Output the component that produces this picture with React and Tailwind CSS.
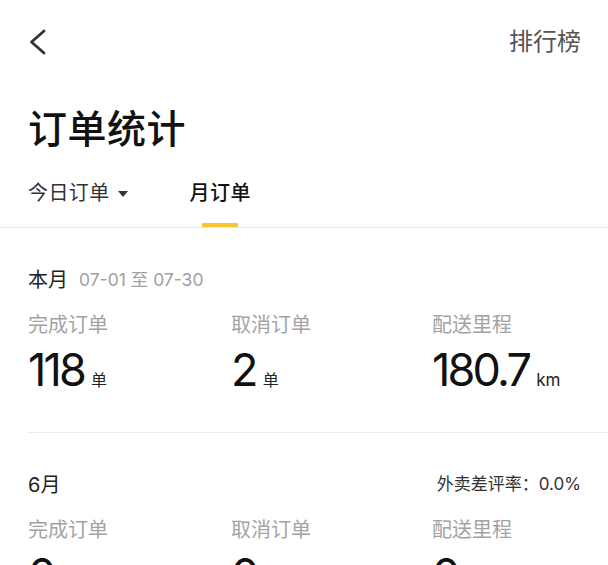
import React from 'react';

const font = "font-['Inter','Noto_Sans_CJK_SC',sans-serif]";

const Stat = ({ label, value, unit }) => (
    <div className="flex flex-col">
        <span className="text-[20px] leading-[28px] text-[#a3a3a3]">{label}</span>
        <div className="mt-[7px] flex items-baseline">
            <span className="text-[45px] leading-[48px] tracking-[-2.8px] text-[#111]">{value}</span>
            <span className={`ml-[7px] text-[#222] ${unit === 'km' ? 'text-[17px]' : 'text-[16px]'}`}>{unit}</span>
        </div>
    </div>
);

const Section = ({ title, extra, right, stats, divider }) => (
    <div className={`pt-[38px] pb-[38px] ml-7 ${divider ? 'border-b border-[#ececec]' : ''}`}>
        <div className="flex items-center justify-between pr-[27px] h-[28px]">
            <div className="flex items-center">
                <span className="text-[20px] text-[#222]">{title}</span>
                {extra && <span className="ml-[11px] text-[17.5px] text-[#a0a0a0]">{extra}</span>}
            </div>
            {right && <span className="text-[17px] text-[#333]">{right}</span>}
        </div>
        <div className="mt-[17px] grid grid-cols-[203px_201px_1fr]">
            {stats.map((s, i) => (
                <Stat key={i} {...s} />
            ))}
        </div>
    </div>
);

export default function App() {
    return (
        <div className={`w-[608px] h-[565px] overflow-hidden bg-white ${font}`}>
            {/* top bar */}
            <div className="h-[83px] px-7 flex items-center justify-between">
                <svg width="20" height="26" viewBox="0 0 20 26" fill="none" className="-ml-[1px]">
                    <path d="M17 2 L4.5 13 L17 24" stroke="#333" strokeWidth="2.8" strokeLinecap="round" strokeLinejoin="round" />
                </svg>
                <span className="text-[24px] text-[#555] -mr-[1px]">排行榜</span>
            </div>

            {/* title */}
            <div className="h-[92px] px-7 flex items-center">
                <h1 className="text-[39px] font-medium text-[#111] tracking-[0.5px]">订单统计</h1>
            </div>

            {/* tabs */}
            <div className="h-[53px] px-7 flex border-b border-[#e6e6e6]">
                <div className="flex items-start">
                    <span className="text-[20px] leading-[36px] text-[#333] tracking-[0.4px]">今日订单</span>
                    <svg width="10" height="6" viewBox="0 0 10 6" className="ml-[8px] mt-[16px]">
                        <path d="M0 0 H10 L5 6 Z" fill="#333" />
                    </svg>
                </div>
                <div className="ml-[62px] flex flex-col items-center">
                    <span className="text-[20px] leading-[36px] text-[#111] font-medium tracking-[0.4px]">月订单</span>
                    <div className="mt-[12px] h-1 w-9 bg-[#f5c72e]" />
                </div>
            </div>

            <Section
                title="本月"
                extra="07-01 至 07-30"
                divider
                stats={[
                    { label: '完成订单', value: '118', unit: '单' },
                    { label: '取消订单', value: '2', unit: '单' },
                    { label: '配送里程', value: '180.7', unit: 'km' },
                ]}
            />

            <Section
                title="6月"
                right="外卖差评率：0.0%"
                stats={[
                    { label: '完成订单', value: '0', unit: '单' },
                    { label: '取消订单', value: '0', unit: '单' },
                    { label: '配送里程', value: '0', unit: 'km' },
                ]}
            />
        </div>
    );
}
